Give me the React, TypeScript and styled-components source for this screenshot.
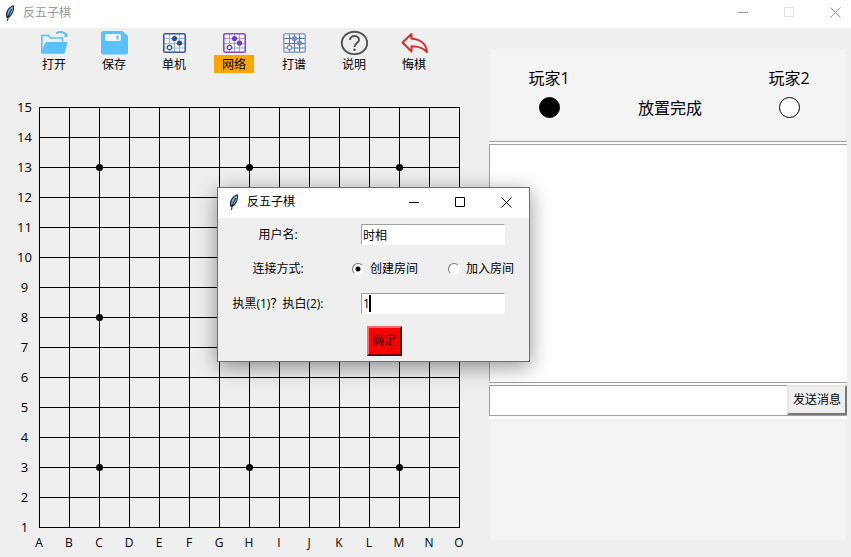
import React, { useState } from "react";
import styled, { createGlobalStyle } from "styled-components";

const GlobalStyle = createGlobalStyle`
  * { box-sizing: border-box; }
  body { margin: 0; background: #efefef; }
  body, button, input, textarea {
    font-family: "Open Sans", "Noto Sans CJK SC", sans-serif;
    font-size: 12px;
    line-height: 18px;
    color: #000;
  }
`;

const Window = styled.div`
  position: relative;
  display: flex;
  flex-direction: column;
  min-height: 100vh;
  background: #efefef;
`;

const TitleBar = styled.header<{ $inactive?: boolean }>`
  display: flex;
  align-items: center;
  height: ${(p) => (p.$inactive ? "28px" : "30px")};
  padding-left: ${(p) => (p.$inactive ? "2px" : "8px")};
  padding-bottom: ${(p) => (p.$inactive ? "3px" : "2px")};
  background: #fff;
  color: ${(p) => (p.$inactive ? "#999" : "#000")};
`;

const Title = styled.h1`
  flex: 1;
  margin: 0 0 0 5px;
  font-size: 12px;
  font-weight: 400;
`;

const WindowButton = styled.button<{ $faint?: boolean }>`
  display: flex;
  align-items: center;
  justify-content: center;
  width: 46px;
  height: 24px;
  padding: 0;
  border: 0;
  background: none;
  color: ${(p) => (p.$faint ? "#e2e2e2" : "inherit")};
`;

const WindowButtons = styled.div<{ $shift?: boolean }>`
  display: flex;
  margin-right: ${(p) => (p.$shift ? "-7px" : "0")};
`;

const Body = styled.div`
  display: flex;
  flex: 1;
`;

const Play = styled.main`
  display: flex;
  flex-direction: column;
  gap: 19px;
  flex: none;
`;

const Toolbar = styled.nav`
  display: flex;
  padding: 2px 0 0 24px;
`;

const Tool = styled.button`
  display: flex;
  flex-direction: column;
  align-items: center;
  width: 60px;
  padding: 0;
  border: 0;
  background: none;
`;

const ToolLabel = styled.span<{ $active?: boolean }>`
  width: 40px;
  height: 18px;
  line-height: 20px;
  background: ${(p) => (p.$active ? "#ffa500" : "transparent")};
`;

const BoardGrid = styled.section`
  display: grid;
  grid-template-columns: 39px auto;
`;

const RowLabels = styled.div`
  display: grid;
  grid-auto-rows: 30px;
  align-items: center;
  padding-left: 10px;
  text-align: center;
  font-size: 13px;
`;

const BoardCell = styled.div`
  padding-top: 15px;
`;

const ColumnLabels = styled.div`
  grid-column: 1 / -1;
  display: grid;
  grid-template-columns: repeat(15, 30px);
  padding: 0 0 4px 24px;
  margin-top: -8px;
  text-align: center;
`;

const Side = styled.aside`
  display: flex;
  flex-direction: column;
  flex: 1;
  min-width: 0;
  padding: 21px 4px 17px 15px;
`;

const Panel = styled.div`
  margin: 0 2px;
  background: #f4f4f4;
`;

const Players = styled(Panel)`
  display: grid;
  grid-template-columns: 116px 1fr 112px;
  height: 90px;
  padding-top: 20px;
  font-size: 16px;
  text-align: center;
`;

const Player = styled.div`
  display: flex;
  flex-direction: column;
  align-items: center;
  gap: 10px;
`;

const Stone = styled.span<{ $black?: boolean }>`
  width: 21px;
  height: 21px;
  border: 1px solid #000;
  border-radius: 50%;
  background: ${(p) => (p.$black ? "#000" : "#fff")};
`;

const Status = styled.div`
  align-self: start;
  padding-top: 30px;
`;

const Groove = styled.div`
  display: flex;
  border-top: 1px solid #a0a0a0;
  border-bottom: 1px solid #fff;
  padding-top: 2px;
  background: #fafafa;
`;

const Chat = styled(Groove)`
  margin-top: 2px;
`;

const MessageRow = styled(Groove)`
  border-bottom: 0;
`;

const ChatLog = styled.textarea`
  flex: 1;
  min-width: 0;
  height: 237px;
  padding: 2px;
  border: 0 solid #a0a0a0;
  border-width: 1px 0 0 1px;
  background: #fff;
  resize: none;
  outline: 0;
`;

const MessageInput = styled.input`
  flex: 1;
  min-width: 0;
  height: 30px;
  border: 0 solid #a0a0a0;
  border-width: 1px 0 0 1px;
  background: #fff;
  outline: 0;
`;

const SendButton = styled.button`
  width: 60px;
  height: 30px;
  padding: 0;
  border: 2px solid;
  border-color: #e6e6e6 #777 #777 #e6e6e6;
  background: #efefef;
  white-space: nowrap;
`;

const Footer = styled(Panel)`
  flex: 1;
  margin-top: 2px;
`;

const FooterEdge = styled(Groove)`
  height: 3px;
`;

const Dialog = styled.form`
  position: absolute;
  left: 217px;
  top: 187px;
  width: 313px;
  border: 1px solid #6e6e6e;
  background: #efefef;
  box-shadow: 0 5px 20px rgba(0, 0, 0, 0.42);
`;

const Fields = styled.div`
  display: grid;
  grid-template-columns: 120px 1fr;
  grid-template-rows: 33px 35px 35px;
  align-items: center;
`;

const FieldLabel = styled.label`
  text-align: center;
  white-space: nowrap;
`;

const Entry = styled.div`
  position: relative;
  width: 144px;
  margin-left: 23px;
`;

const TextInput = styled.input`
  display: block;
  width: 100%;
  height: 21px;
  padding: 0 1px;
  border: 1px solid;
  border-color: #a0a0a0 #fff #fff #a0a0a0;
  border-radius: 0;
  background: #fff;
  outline: 0;
`;

const Caret = styled.span`
  position: absolute;
  left: 8px;
  top: 2px;
  width: 2px;
  height: 17px;
  background: #000;
`;

const Choices = styled.div`
  display: flex;
  gap: 30px;
  padding-left: 14px;
  white-space: nowrap;
`;

const Choice = styled.label`
  display: flex;
  align-items: center;
  gap: 6px;
`;

const Radio = styled.input`
  appearance: none;
  width: 12px;
  height: 12px;
  margin: 0;
  border: 1px solid;
  border-color: #777 #f8f8f8 #f8f8f8 #777;
  border-radius: 50%;
  background: #fff;
  &:checked {
    background: radial-gradient(circle, #000 2px, #fff 3px);
  }
`;

const Actions = styled.div`
  display: flex;
  justify-content: center;
  padding: 5px 0 5px 21px;
`;

const ConfirmButton = styled.button`
  width: 35px;
  height: 30px;
  padding: 0;
  border: 2px solid;
  border-color: #ff6b6b #600 #600 #ff6b6b;
  background: #f00;
  color: #500;
  white-space: nowrap;
`;

const Feather = () => (
  <svg width="16" height="18" viewBox="0 0 16 18" aria-hidden="true">
    <path d="M4.5 14C2.5 9 5.5 3 11.5 1C13 4 11.5 10.5 7 13.5Z" fill="#1a2c40" />
    <path d="M5.2 11.5C5 7.5 7.5 4 10.8 2.2C12 5 10 10 6.5 12.2Z" fill="#7fa9d4" />
    <path d="M5.5 17C6 12 8 8 10 5" stroke="#101820" fill="none" />
  </svg>
);

const glyphs = {
  min: "M0 5.5H10",
  max: "M.5 .5H9.5V9.5H.5Z",
  close: "M.5 .5L10.5 10.5M10.5 .5L.5 10.5",
};

const Glyph = ({ kind }: { kind: keyof typeof glyphs }) => (
  <svg width="11" height="11" viewBox="0 0 11 11" fill="none" stroke="currentColor">
    <path d={glyphs[kind]} />
  </svg>
);

const Controls = ({ inactive }: { inactive?: boolean }) => (
  <WindowButtons $shift={inactive}>
    <WindowButton type="button" aria-label="最小化"><Glyph kind="min" /></WindowButton>
    <WindowButton type="button" aria-label="最大化" $faint={inactive}><Glyph kind="max" /></WindowButton>
    <WindowButton type="button" aria-label="关闭"><Glyph kind="close" /></WindowButton>
  </WindowButtons>
);

const ToolSvg = ({ children }: { children: React.ReactNode }) => (
  <svg width="28" height="25" viewBox="0 0 28 25" fill="none" aria-hidden="true">
    {children}
  </svg>
);

const OpenIcon = () => (
  <ToolSvg>
    <path d="M1.8 23V5.5H8.5L10.5 8H22.5V11.5" stroke="#56bdfd" strokeWidth="1.6" />
    <path d="M6.5 12H27.5L24.5 23.8H1.2L4.5 14Z" fill="#5ac0ff" />
    <path d="M16 3.2C20.5 1 24 1.8 26.5 5.2" stroke="#6fb7e0" strokeWidth="1.8" />
    <path d="M27.5 2.5V7H23.5Z" fill="#6fb7e0" />
  </ToolSvg>
);

const SaveIcon = () => (
  <ToolSvg>
    <path d="M2.5 1H22.5L28 6V23L26.5 24.5H2.5L1 23V2.5Z" fill="#5ac0ff" />
    <rect x="5" y="4" width="16" height="7" rx="2" fill="#f1f8fc" />
    <rect x="16.5" y="5.5" width="2" height="4" fill="#5ac0ff" />
  </ToolSvg>
);

const BoardIcon = ({ frame, line, dot }: { frame: string; line: string; dot: string }) => (
  <ToolSvg>
    <rect x="4" y="4" width="21" height="18" rx="1" fill="#f2f3fb" />
    <path d="M9.5 4V22M14.5 4V22M19.5 4V22M4 8.5H25M4 13.5H25M4 18H25" stroke={line} />
    <rect x="3.75" y="3.75" width="21.5" height="18.5" rx="1.5" stroke={frame} strokeWidth="1.6" />
    <circle cx="14.5" cy="8.5" r="2.6" fill={dot} />
    <circle cx="19.5" cy="13" r="2.6" fill={dot} />
    <circle cx="9.5" cy="17.5" r="2.2" fill="#fff" stroke={dot} strokeWidth="1.2" />
  </ToolSvg>
);

const HelpIcon = () => (
  <ToolSvg>
    <ellipse cx="14.5" cy="13" rx="12.7" ry="11.2" stroke="#555" strokeWidth="2" />
    <path d="M10 10C10 4.8 19 4.8 19 10C19 13 14.5 12.8 14.5 17" stroke="#555" strokeWidth="2" />
    <circle cx="14.5" cy="19.8" r="1.3" fill="#555" />
  </ToolSvg>
);

const UndoIcon = () => (
  <ToolSvg>
    <path
      d="M2.5 12.5L11.5 4V8.8C20 9 26 13.5 27 22C23 17.8 19 16.2 11.5 16.2V21.5Z"
      stroke="#d83030"
      strokeWidth="2"
      strokeLinejoin="round"
    />
  </ToolSvg>
);

const tools = [
  { label: "打开", icon: <OpenIcon /> },
  { label: "保存", icon: <SaveIcon /> },
  { label: "单机", icon: <BoardIcon frame="#3b5998" line="#9db6e0" dot="#264f95" /> },
  { label: "网络", icon: <BoardIcon frame="#8a4cc0" line="#94a9d2" dot="#7936b8" />, active: true },
  { label: "打谱", icon: <BoardIcon frame="#8ea5cb" line="#5573ae" dot="#6f91c7" /> },
  { label: "说明", icon: <HelpIcon /> },
  { label: "悔棋", icon: <UndoIcon /> },
];

const CELL = 30;
const indices = Array.from({ length: 15 }, (_, i) => i);
const stars = [2, 7, 12];

const Board = () => (
  <BoardGrid aria-label="棋盘">
    <RowLabels>
      {indices.map((i) => <span key={i}>{15 - i}</span>)}
    </RowLabels>
    <BoardCell>
      <svg width="421" height="421" viewBox="0 0 421 421" display="block">
        <g stroke="#000" shapeRendering="crispEdges">
          {indices.map((i) => (
            <path key={i} d={`M${i * CELL + 0.5} 0V421M0 ${i * CELL + 0.5}H421`} />
          ))}
        </g>
        {stars.flatMap((x) =>
          stars.map((y) => (
            <circle key={`${x}-${y}`} cx={x * CELL + 0.5} cy={y * CELL + 0.5} r="3.5" />
          ))
        )}
      </svg>
    </BoardCell>
    <ColumnLabels>
      {indices.map((i) => <span key={i}>{String.fromCharCode(65 + i)}</span>)}
    </ColumnLabels>
  </BoardGrid>
);

const ConnectDialog = () => {
  const [mode, setMode] = useState("create");
  return (
    <Dialog role="dialog" aria-label="反五子棋" onSubmit={(e) => e.preventDefault()}>
      <TitleBar>
        <Feather />
        <Title as="h2">反五子棋</Title>
        <Controls />
      </TitleBar>
      <Fields>
        <FieldLabel htmlFor="user">用户名:</FieldLabel>
        <Entry><TextInput id="user" defaultValue="时相" /></Entry>
        <FieldLabel as="span" id="mode">连接方式:</FieldLabel>
        <Choices role="radiogroup" aria-labelledby="mode">
          <Choice>
            <Radio type="radio" name="mode" checked={mode === "create"} onChange={() => setMode("create")} />
            创建房间
          </Choice>
          <Choice>
            <Radio type="radio" name="mode" checked={mode === "join"} onChange={() => setMode("join")} />
            加入房间
          </Choice>
        </Choices>
        <FieldLabel htmlFor="side">执黑(1)？执白(2):</FieldLabel>
        <Entry>
          <TextInput id="side" defaultValue="1" />
          <Caret />
        </Entry>
      </Fields>
      <Actions><ConfirmButton type="submit">确定</ConfirmButton></Actions>
    </Dialog>
  );
};

export default function App() {
  return (
    <>
      <GlobalStyle />
      <Window>
        <TitleBar $inactive>
          <Feather />
          <Title>反五子棋</Title>
          <Controls inactive />
        </TitleBar>
        <Body>
          <Play>
            <Toolbar>
              {tools.map((t) => (
                <Tool key={t.label} type="button">
                  {t.icon}
                  <ToolLabel $active={t.active}>{t.label}</ToolLabel>
                </Tool>
              ))}
            </Toolbar>
            <Board />
          </Play>
          <Side>
            <Players>
              <Player>玩家1<Stone $black /></Player>
              <Status>放置完成</Status>
              <Player>玩家2<Stone /></Player>
            </Players>
            <Chat><ChatLog aria-label="聊天记录" readOnly /></Chat>
            <MessageRow>
              <MessageInput aria-label="消息" />
              <SendButton type="button">发送消息</SendButton>
            </MessageRow>
            <FooterEdge />
            <Footer />
          </Side>
        </Body>
        <ConnectDialog />
      </Window>
    </>
  );
}
